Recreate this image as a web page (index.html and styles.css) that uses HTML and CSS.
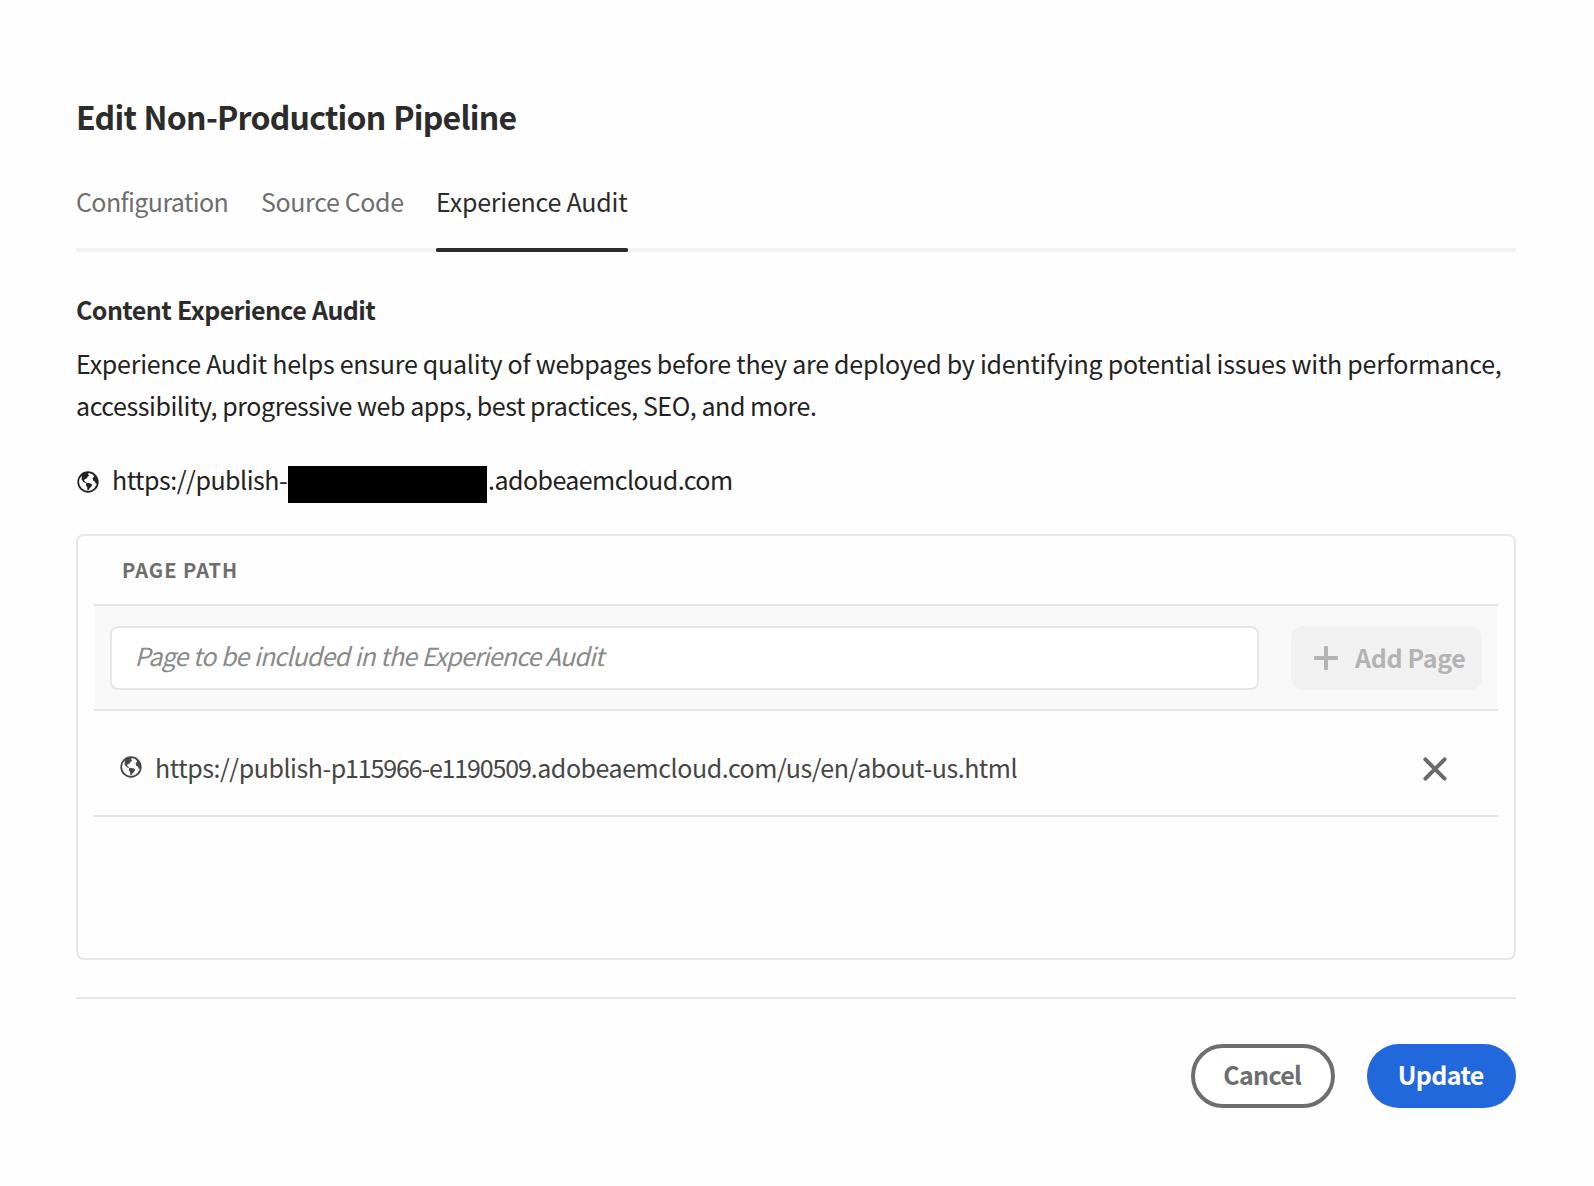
FILE: index.html
```html
<!DOCTYPE html>
<html lang="en">
<head>
<meta charset="utf-8">
<title>Edit Non-Production Pipeline</title>
<link rel="stylesheet" href="styles.css">
</head>
<body>
<svg class="defs" width="0" height="0" aria-hidden="true">
  <symbol id="globe" viewBox="0 0 22 22">
    <circle cx="11" cy="11" r="9.8" fill="none" stroke="currentColor" stroke-width="1.7"/>
    <path fill="currentColor" d="M4.4 3.8 8 1.6 12 1.8 10.9 3 12.2 4.6 10.2 6.2 9.8 7.4 8 7.9 6.9 9.2 8 10.4 9.2 11.5 8.2 11.9 6 10.4 4.6 8.6 4.8 6.2Z"/>
    <path fill="currentColor" d="M9.2 11.7 11.6 11.9 13.6 12.6 15.2 13.8 14.2 15.8 12.6 17.2 11.4 19.2 10.4 19.4 10.2 16.2 8.8 14.2Z"/>
    <path fill="currentColor" d="M16.2 3.2 18.8 5.2 20.6 9 20.4 12.4 18.9 12.8 17.8 10.6 16.2 9.6 15.6 7.4 17 5.6Z"/>
  </symbol>
</svg>
<main class="dialog">
  <h1 class="title">Edit Non-Production Pipeline</h1>
  <nav class="tabs">
    <a class="tab tab-config">Configuration</a>
    <a class="tab tab-source">Source Code</a>
    <a class="tab tab-audit active">Experience Audit</a>
  </nav>
  <h2 class="heading">Content Experience Audit</h2>
  <p class="intro"><span class="intro-lead">Experience Audit helps ensure quality of webpages before they are deployed by identifying potential issues with performance,</span><br><span class="intro-rest">accessibility, progressive web apps, best practices, SEO, and more.</span></p>
  <div class="host">
    <svg class="globe"><use href="#globe"/></svg>
    <span class="host-start">https://publish-</span>
    <span class="redacted"></span>
    <span class="host-end">.adobeaemcloud.com</span>
  </div>
  <section class="card">
    <div class="card-head">PAGE PATH</div>
    <div class="add-row">
      <div class="field"><span class="placeholder">Page to be included in the Experience Audit</span></div>
      <button class="add" disabled>
        <svg class="plus" viewBox="0 0 24 24"><path d="M12 1.6V22.4M1.6 12H22.4"/></svg>
        <span class="add-label">Add Page</span>
      </button>
    </div>
    <div class="page-row">
      <svg class="globe"><use href="#globe"/></svg>
      <span class="page-url">https://publish-<span class="page-id">p115966-e1190509</span>.adobeaemcloud.com/us/en/about-us.html</span>
      <svg class="cross" viewBox="0 0 24 24"><path d="M2.4 2.4 21.6 21.6M21.6 2.4 2.4 21.6"/></svg>
    </div>
  </section>
  <footer class="footer">
    <button class="btn cancel">Cancel</button>
    <button class="btn update">Update</button>
  </footer>
</main>
</body>
</html>
```
FILE: styles.css
```css
* { box-sizing: border-box; }
body {
  margin: 0;
  background: #fefefe;
  color: #222;
  font-family: "Noto Sans CJK SC", "Noto Sans", sans-serif;
  font-size: 25px;
  line-height: 36px;
}
.defs { position: absolute; }
.dialog { padding: 92px 78px 0 76px; }
.title {
  margin: 0;
  font-size: 32px;
  line-height: 48px;
  font-weight: 700;
  letter-spacing: -0.75px;
  word-spacing: 1px;
  color: #2c2c2c;
  white-space: nowrap;
}
.tabs {
  display: flex;
  gap: 33px;
  height: 69px;
  margin-top: 43px;
  box-shadow: inset 0 -4px #f1f1f1;
}
.tab {
  display: flex;
  flex-direction: column;
  justify-content: space-between;
  color: #6e6e6e;
  white-space: nowrap;
}
.tab-config { width: 152px; letter-spacing: -0.6px; }
.tab-source { width: 142px; letter-spacing: -0.37px; }
.tab-audit { width: 192px; letter-spacing: -0.22px; }
.tab.active { color: #2c2c2c; }
.tab.active::after {
  content: "";
  height: 4px;
  border-radius: 1.5px;
  background: #2c2c2c;
}
.heading {
  margin: 39px 0 0;
  font-size: 25px;
  line-height: 36px;
  font-weight: 700;
  letter-spacing: -0.58px;
  word-spacing: 0.8px;
  color: #2c2c2c;
}
.intro {
  margin: 15px 0 0;
  line-height: 42px;
  white-space: nowrap;
}
.intro-lead { letter-spacing: -0.25px; }
.intro-rest { letter-spacing: -0.44px; }
.host {
  display: flex;
  align-items: flex-start;
  height: 73px;
  margin-top: 35px;
  line-height: 37px;
}
.globe { width: 22px; height: 22px; flex: none; }
.host .globe { margin: 10px 13px 0 1px; }
.host-start { width: 176px; letter-spacing: -0.48px; white-space: nowrap; }
.redacted { width: 199px; height: 37px; margin-top: 5px; background: #000; }
.host-end { margin-left: 1px; letter-spacing: -0.55px; }
.card {
  height: 426px;
  padding: 0 16px;
  border: 2px solid #e6e6e6;
  border-radius: 8px;
}
.card-head {
  height: 68px;
  padding: 18px 28px 0;
  font-size: 20px;
  line-height: 32px;
  font-weight: 700;
  letter-spacing: 1px;
  color: #6e6e6e;
}
.add-row {
  display: flex;
  gap: 32px;
  height: 107px;
  padding: 20px 16px;
  background: #f8f8f8;
  border-top: 2px solid #e6e6e6;
  border-bottom: 2px solid #e6e6e6;
}
.field {
  flex: 1;
  height: 64px;
  padding: 7px 22.5px;
  border: 2px solid #e6e6e6;
  border-radius: 8px;
  background: #fff;
  font-style: italic;
  color: #8a8a8a;
  line-height: 40px;
  letter-spacing: -0.86px;
  word-spacing: 0.7px;
}
.add {
  display: flex;
  align-items: center;
  width: 191px;
  height: 64px;
  padding: 0 0 0 23px;
  border: 0;
  border-radius: 12px;
  background: #f1f1f1;
  color: #b3b3b3;
  font: 700 25px/36px "Noto Sans CJK SC", sans-serif;
  letter-spacing: -0.35px;
}
.add-label { padding-bottom: 2px; }
.plus { width: 24px; height: 24px; margin-right: 17px; }
.plus path, .cross path { fill: none; stroke: currentColor; stroke-width: 4; stroke-linecap: round; }
.page-row {
  display: flex;
  align-items: center;
  height: 106px;
  padding: 7px 51px 0 26px;
  border-bottom: 2px solid #e6e6e6;
  color: #464646;
}
.page-row .globe { margin: 0 13px 0 0; }
.page-url { letter-spacing: -0.45px; }
.page-id { letter-spacing: -1.15px; }
.cross { width: 24px; height: 24px; margin: 4px 0 0 auto; color: #6a6a6a; }
.footer {
  display: flex;
  justify-content: flex-end;
  gap: 32px;
  margin-top: 37px;
  padding-top: 45px;
  border-top: 2px solid #e6e6e6;
}
.btn {
  height: 64px;
  padding: 0 1.5px 5px 0;
  border: 0;
  border-radius: 32px;
  font: 700 25px/36px "Noto Sans CJK SC", sans-serif;
  letter-spacing: -0.65px;
}
.cancel { width: 144px; border: 4px solid #6e6e6e; background: #fff; color: #6e6e6e; }
.update { width: 149px; background: #2268dd; color: #fff; }
```
